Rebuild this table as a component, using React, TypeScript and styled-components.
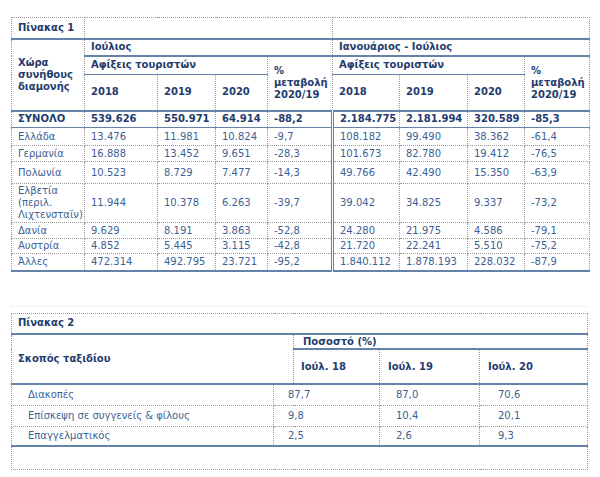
import React from 'react';
import styled, { createGlobalStyle, css } from 'styled-components';

const NAVY = '#1f3c6e';
const BLUE = '#3d5f94';
const LINE = '#6582ab';
const DASH = '#9a9a9a';

const Global = createGlobalStyle`
  html, body { margin: 0; padding: 0; background: #ffffff; }
  body { font-family: "DejaVu Sans", Verdana, sans-serif; }
`;

const Page = styled.div`
  width: 600px;
  height: 477px;
  box-sizing: border-box;
  padding: 17px 0 0 11px;
  display: flex;
  flex-direction: column;
  align-items: flex-start;
`;

const Table = styled.table<{ $w: number }>`
  border-collapse: collapse;
  table-layout: fixed;
  width: ${(p) => p.$w}px;
  border: 1px dotted ${DASH};
  font-size: 10px;
  line-height: 12px;
`;

const Row = styled.tr<{ $h: number }>`
  height: ${(p) => p.$h}px;
`;

type Edge = 'thick' | 'thin' | undefined;

const edge = (e: Edge) =>
  e === 'thick' ? `2px solid ${LINE}` : e === 'thin' ? `1px solid ${LINE}` : undefined;

const Cell = styled.td<{ $b?: Edge; $dl?: boolean; $pl?: number; $bold?: boolean }>`
  border: 1px dotted ${DASH};
  padding: 0 2px 0 ${(p) => p.$pl ?? 6}px;
  vertical-align: middle;
  text-align: left;
  color: ${(p) => (p.$bold ? NAVY : BLUE)};
  font-weight: ${(p) => (p.$bold ? 700 : 400)};
  white-space: normal;
  ${(p) => p.$b && css`border-bottom: ${edge(p.$b)};`}
  ${(p) => p.$dl && css`border-left: 3px double ${LINE};`}
`;

const Head = styled(Cell).attrs({ $bold: true })``;

const Rule = styled.div`
  width: 576px;
  margin-top: 34px;
  border-top: 1px dotted #e4e4e4;
`;

const Spacer = styled.div`
  height: 6px;
`;

type DataRow = { name: string; h: number; v: string[]; last?: boolean };

const rows1: DataRow[] = [
  { name: 'Ελλάδα', h: 18, v: ['13.476', '11.981', '10.824', '-9,7', '108.182', '99.490', '38.362', '-61,4'] },
  { name: 'Γερμανία', h: 16, v: ['16.888', '13.452', '9.651', '-28,3', '101.673', '82.780', '19.412', '-76,5'] },
  { name: 'Πολωνία', h: 22, v: ['10.523', '8.729', '7.477', '-14,3', '49.766', '42.490', '15.350', '-63,9'] },
  { name: 'Ελβετία (περιλ. Λιχτενσταϊν)', h: 39, v: ['11.944', '10.378', '6.263', '-39,7', '39.042', '34.825', '9.337', '-73,2'] },
  { name: 'Δανία', h: 16, v: ['9.629', '8.191', '3.863', '-52,8', '24.280', '21.975', '4.586', '-79,1'] },
  { name: 'Αυστρία', h: 15, v: ['4.852', '5.445', '3.115', '-42,8', '21.720', '22.241', '5.510', '-75,2'] },
  { name: 'Άλλες', h: 17, v: ['472.314', '492.795', '23.721', '-95,2', '1.840.112', '1.878.193', '228.032', '-87,9'], last: true },
];

const total = ['539.626', '550.971', '64.914', '-88,2', '2.184.775', '2.181.994', '320.589', '-85,3'];

const cols1 = [73, 73, 58, 52, 65, 67, 68, 57, 65];
const cols2 = [262, 20, 86, 100, 108];

const rows2 = [
  { name: 'Διακοπές', h: 21, v: ['87,7', '87,0', '70,6'] },
  { name: 'Επίσκεψη σε συγγενείς & φίλους', h: 21, v: ['9,8', '10,4', '20,1'] },
  { name: 'Επαγγελματικός', h: 20, v: ['2,5', '2,6', '9,3'], last: true },
];

const Change = () => (
  <>
    %
    <br />
    μεταβολή
    <br />
    2020/19
  </>
);

export default function App() {
  return (
    <Page>
      <Global />
      <Table $w={578}>
        <colgroup>
          {cols1.map((w, i) => (
            <col key={i} style={{ width: w }} />
          ))}
        </colgroup>
        <tbody>
          <Row $h={21}>
            <Head $b="thick">Πίνακας 1</Head>
            <Cell colSpan={4} $b="thick" />
            <Cell colSpan={4} $b="thick" />
          </Row>
          <Row $h={17}>
            <Head rowSpan={3} $b="thick">Χώρα συνήθους διαμονής</Head>
            <Head colSpan={4} $b="thick">Ιούλιος</Head>
            <Head colSpan={4} $b="thick">Ιανουάριος - Ιούλιος</Head>
          </Row>
          <Row $h={19}>
            <Head colSpan={3} $b="thin">Αφίξεις τουριστών</Head>
            <Head rowSpan={2} $b="thick"><Change /></Head>
            <Head colSpan={3} $b="thin">Αφίξεις τουριστών</Head>
            <Head rowSpan={2} $b="thick"><Change /></Head>
          </Row>
          <Row $h={36}>
            {['2018', '2019', '2020'].map((y) => (
              <Head key={'a' + y} $b="thick">{y}</Head>
            ))}
            {['2018', '2019', '2020'].map((y) => (
              <Head key={'b' + y} $b="thick">{y}</Head>
            ))}
          </Row>
          <Row $h={17}>
            <Head $b="thin">ΣΥΝΟΛΟ</Head>
            {total.map((v, i) => (
              <Head key={i} $b="thin" $dl={i === 4}>{v}</Head>
            ))}
          </Row>
          {rows1.map((r) => (
            <Row key={r.name} $h={r.h}>
              <Cell $b={r.last ? 'thick' : undefined}>{r.name}</Cell>
              {r.v.map((v, i) => (
                <Cell key={i} $b={r.last ? 'thick' : undefined} $dl={i === 4}>{v}</Cell>
              ))}
            </Row>
          ))}
        </tbody>
      </Table>

      <Rule />
      <Spacer />

      <Table $w={576}>
        <colgroup>
          {cols2.map((w, i) => (
            <col key={i} style={{ width: w }} />
          ))}
        </colgroup>
        <tbody>
          <Row $h={21}>
            <Head colSpan={5} $b="thick">Πίνακας 2</Head>
          </Row>
          <Row $h={15}>
            <Head colSpan={2} rowSpan={2} $b="thick">Σκοπός ταξιδίου</Head>
            <Head colSpan={3} $b="thick" $pl={9}>Ποσοστό (%)</Head>
          </Row>
          <Row $h={35}>
            <Head $b="thick" $pl={7}>Ιούλ. 18</Head>
            <Head $b="thick" $pl={8}>Ιούλ. 19</Head>
            <Head $b="thick" $pl={8}>Ιούλ. 20</Head>
          </Row>
          {rows2.map((r) => (
            <Row key={r.name} $h={r.h}>
              <Cell $pl={16} $b={r.last ? 'thick' : undefined}>{r.name}</Cell>
              <Cell colSpan={2} $pl={14} $b={r.last ? 'thick' : undefined}>{r.v[0]}</Cell>
              <Cell $pl={16} $b={r.last ? 'thick' : undefined}>{r.v[1]}</Cell>
              <Cell $pl={18} $b={r.last ? 'thick' : undefined}>{r.v[2]}</Cell>
            </Row>
          ))}
          <Row $h={23}>
            <Cell colSpan={5} />
          </Row>
        </tbody>
      </Table>
    </Page>
  );
}
